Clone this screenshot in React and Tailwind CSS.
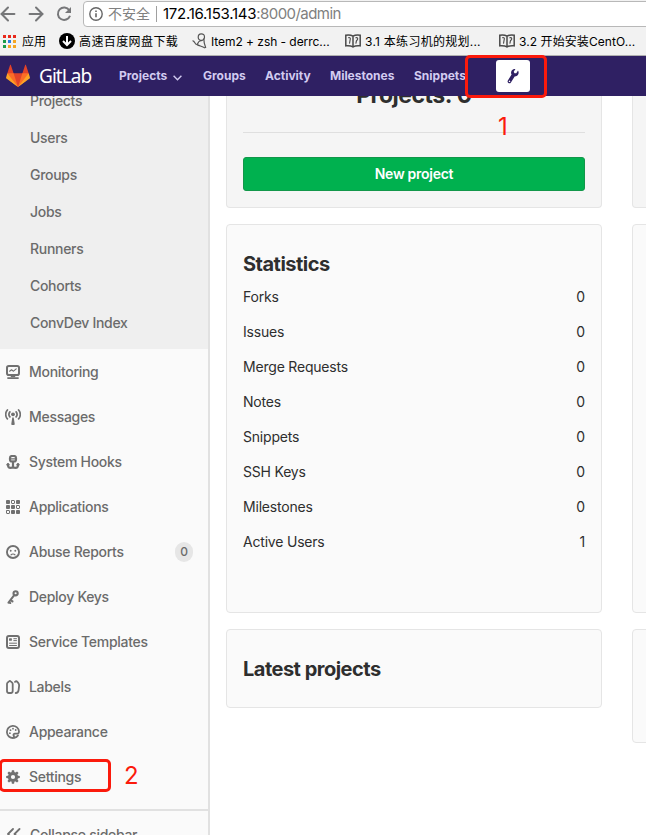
import React from "react";
import { ArrowLeft, ArrowRight } from "lucide-react";

const gray = "#707070";

function Svg({ children, className = "size-[14px]", box = "0 0 14 14" }) {
  return (
    <svg className={`shrink-0 ${className}`} viewBox={box} fill="none" stroke={gray} strokeWidth="1.8" strokeLinecap="round" strokeLinejoin="round">
      {children}
    </svg>
  );
}

const MonitorIcon = () => (
  <Svg>
    <rect x="1" y="1" width="12" height="9" rx="1.8" strokeWidth="2" />
    <path d="M3.600 6.200l1.900-1.500 2 1.500 2.700-2.400" strokeWidth="1.100" />
    <path d="M5.500 11.500h3" strokeWidth="1.600" />
    <path d="M2 13.100h10" strokeWidth="1.800" />
  </Svg>
);
const MessagesIcon = () => (
  <Svg className="-mx-px h-4 w-4" box="0 0 16 16">
    <circle cx="8" cy="5.300" r="1.900" fill={gray} stroke="none" />
    <path d="M7.300 8.500h1.400l1 6.300c.1.800-.4 1.200-1 1.200H7.300c-.6 0-1.100-.4-1-1.200z" fill={gray} stroke="none" />
    <path d="M4.900 2.900a4 4 0 0 0 0 5M11.100 2.900a4 4 0 0 1 0 5M2.400 1a6.500 6.500 0 0 0 0 8.800M13.600 1a6.500 6.500 0 0 1 0 8.800" strokeWidth="1.700" />
  </Svg>
);
const HookIcon = () => (
  <Svg>
    <rect x="4" y="1" width="6" height="5.500" rx="2" strokeWidth="2.200" />
    <path d="M4.500 3.900h5" strokeWidth="1.100" />
    <path d="M7 6.500V12" strokeWidth="2.200" />
    <path d="M2 9.300v1c0 1.700 1.100 2.600 2.500 2.600S7 12.200 7 11.200c0 1 1.100 1.700 2.500 1.700s2.500-.9 2.500-2.600v-1" strokeWidth="2.100" />
    <path d="M1 9.700l1-1 1 1M11 9.700l1-1 1 1" strokeWidth="1.500" />
  </Svg>
);
const AppsIcon = () => {
  const hollow = [1, 5, 6];
  return (
    <Svg>
      {[0, 1, 2, 3, 4, 5, 6, 7, 8].map((i) => {
        const x = (i % 3) * 5;
        const y = Math.floor(i / 3) * 5;
        return hollow.includes(i) ? (
          <rect key={i} x={x + 0.5} y={y + 0.5} width="3" height="3" rx="0.5" strokeWidth="1" />
        ) : (
          <rect key={i} x={x} y={y} width="4" height="4" rx="0.9" fill={gray} stroke="none" />
        );
      })}
    </Svg>
  );
};
const FrownIcon = () => (
  <Svg>
    <circle cx="7" cy="7" r="6.050" strokeWidth="1.900" />
    <circle cx="4.700" cy="5.800" r="0.950" fill={gray} stroke="none" />
    <circle cx="9.300" cy="5.800" r="0.950" fill={gray} stroke="none" />
    <path d="M5 9.900c1-1.200 3-1.200 4 0" strokeWidth="1.200" />
  </Svg>
);
const KeyIcon = () => (
  <Svg>
    <circle cx="9.600" cy="3.300" r="2.100" strokeWidth="2.100" />
    <path d="M8.200 5.200L2.500 12.600M4.500 10.100l2 1.300M2.700 12.200l1.600.9" strokeWidth="2" />
  </Svg>
);
const TemplateIcon = () => (
  <Svg>
    <rect x="1" y="1" width="12" height="12" rx="1.900" strokeWidth="2" />
    <rect x="3" y="3.200" width="2.900" height="2.600" rx="0.600" fill={gray} stroke="none" />
    <path d="M7.800 3.700h2.700M7.800 5.600h2.700M3.500 8.200h7M3.500 10.500h7" strokeWidth="1" />
  </Svg>
);
const LabelsIcon = () => (
  <Svg>
    <path d="M1 4.100c0-.6.2-1 .6-1.400l1.400-1.300c.6-.6 1.100-.6 1.700 0l1.400 1.300c.4.400.6.800.6 1.400v7c0 1.200-.7 1.900-1.800 1.900H2.800C1.700 13 1 12.300 1 11.100z" />
    <path d="M9 1.900c1-.9 1.600-.8 2.300 0l1.100 1.300c.8 1 .8 1.600.7 2.700l-.5 4.200c-.2 1.800-1.200 2.900-2.900 2.900" />
  </Svg>
);
const PaletteIcon = () => (
  <Svg>
    <path d="M7.300 13A6.050 6.050 0 1 1 13 6.600c0 1.500-.9 2.200-2.100 2H9c-1.200 0-1.800 1-1.400 1.900.5 1 .8 2-.3 2.500z" />
    <circle cx="3.900" cy="8.200" r="0.900" fill={gray} stroke="none" />
    <circle cx="4.500" cy="5.200" r="0.900" fill={gray} stroke="none" />
    <circle cx="7" cy="3.700" r="0.900" fill={gray} stroke="none" />
    <circle cx="9.700" cy="5" r="0.900" fill={gray} stroke="none" />
    <path d="M8.400 12.700c1.500-.3 2.700-1 3.500-2.200" strokeWidth="1.900" />
  </Svg>
);
const GearIcon = () => (
  <Svg>
    <circle cx="7" cy="7" r="3.600" strokeWidth="3" />
    {[0, 45, 90, 135, 180, 225, 270, 315].map((a) => (
      <path key={a} d="M5.500 2.800L5.900 .2h2.200L8.500 2.800z" fill={gray} stroke="none" transform={`rotate(${a} 7 7)`} />
    ))}
  </Svg>
);

const subItems = ["Projects", "Users", "Groups", "Jobs", "Runners", "Cohorts", "ConvDev Index"];
const items = [
  ["Monitoring", MonitorIcon],
  ["Messages", MessagesIcon],
  ["System Hooks", HookIcon],
  ["Applications", AppsIcon],
  ["Abuse Reports", FrownIcon, "0"],
  ["Deploy Keys", KeyIcon],
  ["Service Templates", TemplateIcon],
  ["Labels", LabelsIcon],
  ["Appearance", PaletteIcon],
  ["Settings", GearIcon],
];
const stats = [
  ["Forks", 0],
  ["Issues", 0],
  ["Merge Requests", 0],
  ["Notes", 0],
  ["Snippets", 0],
  ["SSH Keys", 0],
  ["Milestones", 0],
  ["Active Users", 1],
];

function BookIcon() {
  return (
    <svg className="h-[14px] w-4 shrink-0" viewBox="0 0 16 14" fill="none" stroke="#4a4a4a" strokeWidth="1.500">
      <path d="M8 2.200C6 .9 3.500.8 .8 1.200v10.600c2.700-.3 5.200-.2 7.200 1.200 2-1.400 4.500-1.500 7.200-1.200V1.200C12.500.8 10 .9 8 2.200zM8 2.200V13" />
      <path d="M3.200 3.800c1.800-.5 2.500.3 2 1.700L4.500 9.600M10.500 4c1.300-.9 2.600-.2 2.100 1.300-.4 1.200-1.600 1-1.300 2.400l-.5 2" strokeWidth="1.100" />
    </svg>
  );
}

function Bookmark({ icon, children, className }) {
  return (
    <div className={`flex shrink-0 items-center whitespace-nowrap text-[12px] leading-[18px] text-black ${className}`}>
      {icon}
      <span className="mt-px">{children}</span>
    </div>
  );
}

function Browser() {
  const dots = ["#e8291c", "#e8291c", "#e8291c", "#1a9c4b", "#2a7de1", "#f5a623", "#1a9c4b", "#f5a623", "#f5a623"];
  return (
    <div className="h-14 overflow-hidden border-b border-[#b0b0b0] bg-[#f2f2f2]">
      <div className="flex h-[27px] items-center pt-px text-[#767779]">
        <ArrowLeft className="ml-[-3px] size-[22px] shrink-0" strokeWidth={2.200} />
        <ArrowRight className="ml-[6px] size-[22px] shrink-0" strokeWidth={2.200} />
        <svg className="ml-[9px] size-4 shrink-0" viewBox="0 0 16 16" fill="none" stroke="currentColor" strokeWidth="2">
          <path d="M13.300 4.300A6.200 6.200 0 1 0 14 9.700" />
          <path d="M15 1v6H9z" fill="currentColor" stroke="none" />
        </svg>
        <div className="ml-[11px] flex h-[26px] w-[580px] shrink-0 items-center whitespace-nowrap rounded border border-[#b8b8b8] bg-white pl-[5px] text-[14px] text-[#808080]">
          <svg className="size-[14px] shrink-0" viewBox="0 0 14 14" fill="none" stroke="#666" strokeWidth="1.400">
            <circle cx="7" cy="7" r="6.200" />
            <path d="M7 6.200v4M7 3.500v1.500" strokeWidth="1.600" />
          </svg>
          <span className="ml-[5px] w-[42px] pb-[2px]">不安全</span>
          <span className="ml-[6px] h-4 w-px bg-[#a0a0a0]" />
          <span className="ml-[6px] text-[15px]">
            <span className="tracking-[-0.260px] text-black">172.16.153.143</span>
            <span className="tracking-[-0.560px]">:8000/admin</span>
          </span>
        </div>
      </div>
      <div className="flex h-7 items-center">
        <Bookmark
          className="ml-[3px] w-[56px]"
          icon={
            <span className="mr-[6px] grid grid-cols-3 gap-[2px]">
              {dots.map((c, i) => (
                <i key={i} className="size-[3px]" style={{ background: c }} />
              ))}
            </span>
          }
        >
          应用
        </Bookmark>
        <Bookmark
          className="w-[133px]"
          icon={
            <svg className="mr-1 size-4" viewBox="0 0 16 16">
              <circle cx="8" cy="8" r="8" fill="#000" />
              <path d="M8 3v9M4 8l4 4 4-4" fill="none" stroke="#fff" strokeWidth="2" />
            </svg>
          }
        >
          <span className="tracking-[0.4px]">高速百度网盘下载</span>
        </Bookmark>
        <Bookmark
          className="w-[153px]"
          icon={
            <svg className="mr-1 h-4 w-[15px]" viewBox="0 0 15 16" fill="none" stroke="#555" strokeWidth="1.200">
              <path d="M.5 8c2.200-.6 2.300 3.500 4 3.500 2 0 1-3 3.500-3.500s4.500-1.500 4.500-4-1.300-3.200-3.200-3.200S6.200 2 6.200 4.200 8 7.500 10 7.300" />
              <path d="M11.800 5.500c0 4 .7 6.500 2 9.500M5 11.600c2.500 1.300 5 1.700 8 3.400" />
            </svg>
          }
        >
          <span className="tracking-[-0.050px]">Item2 + zsh - derrc...</span>
        </Bookmark>
        <Bookmark className="w-[154px] gap-1" icon={<BookIcon />}>
          <span className="tracking-[0.260px]">3.1 本练习机的规划...</span>
        </Bookmark>
        <Bookmark className="gap-1" icon={<BookIcon />}>
          <span className="tracking-[0.080px]">3.2 开始安装CentO...</span>
        </Bookmark>
      </div>
    </div>
  );
}

function Navbar() {
  return (
    <nav className="flex h-10 items-center whitespace-nowrap bg-[#2f2063] text-[12px] font-bold text-[#d2cbf0]">
      <svg className="ml-[6px] size-6 shrink-0" viewBox="0 0 36 36">
        <path fill="#e24329" d="M2 14l9.380 9v-9l-4-12.280c-.205-.632-1.176-.632-1.380 0z" />
        <path fill="#e24329" d="M34 14l-9.380 9v-9l4-12.280c.205-.632 1.176-.632 1.380 0z" />
        <path fill="#e24329" d="M18 34.380L3 14h30z" />
        <path fill="#fc6d26" d="M18 34.380L11.380 14H2l4 11z" />
        <path fill="#fc6d26" d="M18 34.380L24.620 14H34l-4 11z" />
        <path fill="#fca326" d="M2 14L.1 20.160c-.18.565 0 1.200.5 1.560l17.420 12.660z" />
        <path fill="#fca326" d="M34 14l1.900 6.160c.18.565 0 1.200-.5 1.560L18 34.380z" />
      </svg>
      <span className="ml-[9px] w-[80px] font-['Noto_Sans'] text-[19px] font-normal tracking-[-0.950px] text-white">GitLab</span>
      <span className="w-[54px]">Projects</span>
      <svg className="mt-1 h-[6px] w-[9px]" viewBox="0 0 9 6" fill="none" stroke="currentColor" strokeWidth="1.400">
        <path d="M.6 .8L4.500 4.800 8.400 .8" />
      </svg>
      <span className="ml-[21px] w-[62px]">Groups</span>
      <span className="w-[65px]">Activity</span>
      <span className="w-[84px] tracking-[-0.020px]">Milestones</span>
      <span className="w-[82px]">Snippets</span>
      <span className="flex h-8 w-[34px] items-center justify-center rounded-[3px] bg-white pr-px">
        <svg className="size-[17px]" viewBox="0 0 18 18">
          <g transform="rotate(32 9 9)">
            <path
              fill="#2f2063"
              fillRule="evenodd"
              d="M7.400 .6v3.400L9 5l1.600-1V.6c1.500.7 2.400 2.100 2.400 3.800 0 1.500-.8 2.700-2.100 3.400v7.400c0 1.200-.8 2-1.900 2s-1.900-.8-1.900-2V7.800C5.800 7.100 5 5.900 5 4.400 5 2.700 5.900 1.300 7.400.6zM9 14.200a.8.8 0 1 0 0 1.600.8.8 0 0 0 0-1.600z"
            />
          </g>
        </svg>
      </span>
    </nav>
  );
}

function Sidebar() {
  return (
    <aside className="h-[739px] w-[210px] shrink-0 overflow-hidden border-r-2 border-[#e1e1e1] bg-[#fafafa] text-[14px] font-[450] tracking-[-0.300px] text-[#6b6b6b]">
      <div className="-mt-[13px] h-[266px] bg-[#efefef]">
        {subItems.map((label) => (
          <div key={label} className="flex h-[37px] items-center pb-[2px] pl-[30px]">{label}</div>
        ))}
      </div>
      {items.map(([label, Icon, badge]) => (
        <div key={label} className="flex h-[45px] items-center pl-[6px] pr-[15px] pt-px">
          <Icon />
          <span className="ml-[9px] pb-[2px]">{label}</span>
          {badge && (
            <span className="ml-auto flex h-5 w-[18px] items-center justify-center rounded-full bg-[#e6e6e6] text-[12px]">{badge}</span>
          )}
        </div>
      ))}
      <div className="mt-[10px] flex h-[47px] items-center border-t-2 border-[#e1e1e1] pl-[7px]">
        <Svg className="h-3 w-[14px]" box="0 0 14 12">
          <path d="M6 1L1 6l5 5M12.500 1l-5 5 5 5" />
        </Svg>
        <span className="ml-[9px] pt-px">Collapse sidebar</span>
      </div>
    </aside>
  );
}

function Main() {
  return (
    <main className="flex h-[739px] w-[436px] gap-[30px] overflow-hidden bg-white pl-4 text-[14px] text-[#2e2e2e]">
      <div className="w-[376px] shrink-0">
        <section className="flex h-28 flex-col rounded-b border border-t-0 border-[#e5e5e5] bg-[#f5f5f5] px-4">
          <h2 className="-mt-[15px] h-7 text-center text-[23px] font-[650] leading-7 tracking-[-0.500px]">Projects: 0</h2>
          <hr className="mt-[23px] border-[#dfdfdf]" />
          <button className="mt-6 h-[34px] rounded-[3px] border border-[#12974a] bg-[#00b14f] pb-[2px] font-semibold tracking-[-0.280px] text-white">New project</button>
        </section>
        <section className="mt-4 h-[389px] rounded border border-[#e5e5e5] bg-[#fafafa] px-4 pt-6">
          <h2 className="h-[30px] text-[20px] font-[650] leading-[30px] tracking-[-0.510px]">Statistics</h2>
          {stats.map(([label, value]) => (
            <p key={label} className="flex h-[35px] items-center justify-between tracking-[-0.200px]">
              <span>{label}</span>
              <span>{value}</span>
            </p>
          ))}
        </section>
        <section className="mt-4 h-[79px] rounded border border-[#e5e5e5] bg-[#fafafa] px-4 pt-6">
          <h2 className="text-[20px] font-[650] leading-[30px] tracking-[-0.510px]">Latest projects</h2>
        </section>
      </div>
      <div className="w-[376px] shrink-0">
        <div className="h-28 rounded-b border border-t-0 border-[#e5e5e5] bg-[#f5f5f5]" />
        <div className="mt-4 h-[389px] rounded border border-[#e5e5e5] bg-[#fafafa]" />
        <div className="mt-4 h-[114px] rounded border border-[#e5e5e5] bg-[#fafafa]" />
      </div>
    </main>
  );
}

export default function App() {
  return (
    <div className="relative h-[835px] w-[646px] overflow-hidden bg-white font-[Inter,'Noto_Sans_CJK_SC',sans-serif]">
      <Browser />
      <Navbar />
      <div className="flex">
        <Sidebar />
        <Main />
      </div>
      <div className="absolute left-[465px] top-[55px] h-[43px] w-[82px] rounded-[5px] border-[3px] border-[#fb1a0c]" />
      <span className="absolute left-[498px] top-[112px] text-[24px] leading-[30px] text-[#fb1a0c]">1</span>
      <div className="absolute left-[-1px] top-[759px] h-[33px] w-[112px] rounded-[5px] border-[3px] border-[#fb1a0c]" />
      <span className="absolute left-[124px] top-[761px] text-[24px] leading-[30px] text-[#fb1a0c]">2</span>
    </div>
  );
}
